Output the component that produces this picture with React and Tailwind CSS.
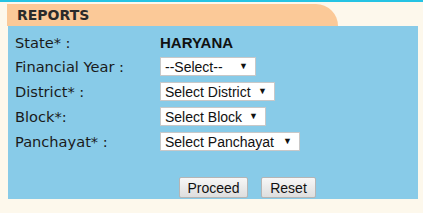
import React from "react";

const Select = ({ text, w }) => (
  <div
    className="flex items-center justify-between h-[19px] bg-white border border-[#c8c8c8] pl-[4px] pr-[7px] text-[14px] text-[#111] leading-none"
    style={{ width: w, fontFamily: '"Liberation Sans", Arial, sans-serif' }}
  >
    <span>{text}</span>
    <span className="text-[9px]">▼</span>
  </div>
);

const Row = ({ label, children, h = "h-[25px]" }) => (
  <div className={`flex items-center ${h}`}>
    <div className="w-[145px] text-[14.6px] text-[#1a1a1a]">{label}</div>
    <div>{children}</div>
  </div>
);

export default function App() {
  return (
    <div
      className="w-[423px] h-[213px] bg-[#fdf8ec] overflow-hidden"
      style={{ fontFamily: '"DejaVu Sans", Verdana, sans-serif' }}
    >
      <div className="h-[2px] bg-[#25c3e3]" />
      <div className="pl-[7px] pt-[2px]">
        <div className="w-[331px] h-[22px] bg-[#fbc998] rounded-tr-[28px] flex items-center pl-[10px]">
          <span className="text-[14px] font-bold text-[#2a2a2a]">REPORTS</span>
        </div>
        <div className="ml-[1px] w-[410px] h-[173px] bg-[#88cbe8] pl-[7px] pt-[6px]">
          <Row label="State* :" h="h-[22px]">
            <span
              className="text-[15px] font-bold text-[#111]"
              style={{ fontFamily: '"Liberation Sans", Arial, sans-serif' }}
            >
              HARYANA
            </span>
          </Row>
          <Row label="Financial Year :">
            <Select text="--Select--" w={96} />
          </Row>
          <Row label="District* :">
            <Select text="Select District" w={115} />
          </Row>
          <Row label="Block*:">
            <Select text="Select Block" w={106} />
          </Row>
          <Row label="Panchayat* :">
            <Select text="Select Panchayat" w={140} />
          </Row>
          <div
            className="flex gap-[13px] pl-[164px] mt-[23px]"
            style={{ fontFamily: '"Liberation Sans", Arial, sans-serif' }}
          >
            <button className="w-[69px] h-[21px] border border-[#b5b5b5] rounded-[2px] bg-gradient-to-b from-[#f7f7f7] to-[#dedede] text-[14px] text-[#111] leading-none">
              Proceed
            </button>
            <button className="w-[55px] h-[21px] border border-[#b5b5b5] rounded-[2px] bg-gradient-to-b from-[#f7f7f7] to-[#dedede] text-[14px] text-[#111] leading-none">
              Reset
            </button>
          </div>
        </div>
      </div>
    </div>
  );
}
